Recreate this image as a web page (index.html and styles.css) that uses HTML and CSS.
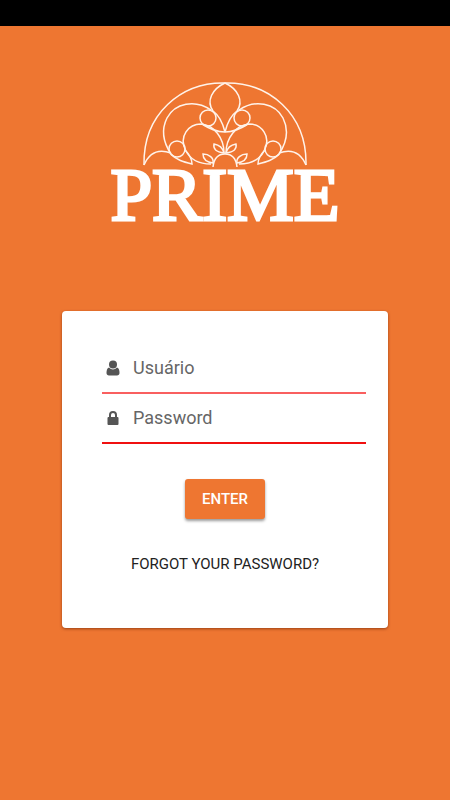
FILE: index.html
```html
<!DOCTYPE html>
<html lang="en">
<head>
<meta charset="utf-8">
<meta name="viewport" content="width=device-width, initial-scale=1">
<title>Prime</title>
<link rel="stylesheet" href="styles.css">
</head>
<body>
<div class="status-bar"></div>
<main class="login">
  <svg class="logo" viewBox="100 76 250 172" role="img" aria-label="Prime">
    <defs>
      <g id="half">
        <path d="M144 165C143 114 181 82 225 83"/>
        <path d="M225 83C212 89 206 101 213 111C220 116 223 124 225 132"/>
        <path d="M211 110C195 99 175 103 167 118C160 132 165 145 171 154C176 160 184 162 192 164C192 159 190 155 185 150"/>
        <circle cx="208" cy="118" r="8"/>
        <circle cx="177" cy="149" r="8"/>
        <path d="M144 165C150 151 160 149 171 153"/>
        <path d="M202 124C210 129 216 132 225 132"/>
        <path d="M211 164C199 164 190 159 186 151C178 136 189 124 201 124C214 125 224 138 224 153"/>
        <path d="M224 153C216 152 213 149 214 144C220 145 223 149 224 153Z"/>
        <path d="M213 163C206 162 203 158 203 154C209 154 214 158 213 163Z"/>
        <path d="M213 167C214 158 218 154 225 154"/>
      </g>
    </defs>
    <g class="rosette">
      <use href="#half"/>
      <use href="#half" transform="translate(450 0) scale(-1 1)"/>
    </g>
    <text class="wordmark" x="225" y="220" text-anchor="middle">PRIME</text>
  </svg>
  <form class="card">
    <div class="fields">
      <div class="field field-user">
        <svg class="icon" viewBox="0 0 14 16" aria-hidden="true"><circle cx="7" cy="4.5" r="4"/><path d="M3 7.5C1 8 .5 10.500.5 13C.5 14.500 1.500 15.500 3 15.500H11C12.500 15.500 13.500 14.500 13.500 13C13.500 10.500 13 8 11 7.500C8.500 10 5.500 10 3 7.500Z"/></svg>
        <input type="text" placeholder="Usuário" aria-label="Usuário">
      </div>
      <div class="field">
        <svg class="icon" viewBox="0 0 14 16" aria-hidden="true"><path fill-rule="evenodd" d="M3 7V5A4 4 0 0 1 11 5V7H11.500Q12.500 7 12.500 8V14Q12.500 15 11.500 15H2.500Q1.500 15 1.500 14V8Q1.500 7 2.500 7ZM5 7H9V5A2 2 0 0 0 5 5Z"/></svg>
        <input type="password" placeholder="Password" aria-label="Password">
      </div>
    </div>
    <button class="enter" type="submit">ENTER</button>
    <a class="forgot" href="#">FORGOT YOUR PASSWORD?</a>
  </form>
</main>
</body>
</html>
```
FILE: styles.css
```css
* {
  box-sizing: border-box;
}

body {
  margin: 0;
  min-height: 100vh;
  background: #ee7631;
  font-family: Roboto, "Liberation Sans", sans-serif;
}

.status-bar {
  height: 26px;
  background: #000;
}

.login {
  display: flex;
  flex-direction: column;
  align-items: center;
  padding: 50px 62px;
}

.logo {
  width: 250px;
  max-width: 100%;
  overflow: visible;
}

.rosette {
  fill: none;
  stroke: #fff3ea;
  stroke-width: 1.5;
}

.wordmark {
  font-family: "Liberation Serif", serif;
  font-size: 75px;
  fill: #fff;
  stroke: #fff;
  stroke-width: 3;
}

.card {
  display: flex;
  flex-direction: column;
  align-items: center;
  width: 100%;
  margin-top: 63px;
  padding: 33px 22px 54px 40px;
  background: #fff;
  border-radius: 4px;
  box-shadow: 0 1px 3px rgba(100, 30, 0, 0.6);
}

.fields {
  width: 100%;
}

.field {
  display: flex;
  align-items: center;
  height: 50px;
  padding-left: 4px;
  border-bottom: 2px solid #f01010;
}

.field-user {
  border-color: #f95f5f;
}

.icon {
  width: 14px;
  height: 16px;
  fill: #555;
}

.field input {
  flex: 1;
  min-width: 0;
  padding: 0 0 0 13px;
  border: 0;
  outline: 0;
  background: transparent;
  font: 18px/24px Roboto, "Liberation Sans", sans-serif;
}

.field input::placeholder {
  color: #666;
  opacity: 1;
}

.enter {
  height: 40px;
  margin: 35px 18px 0 0;
  padding: 0 17px;
  border: 0;
  border-radius: 3px;
  background: #ee7631;
  box-shadow: 0 2px 3px rgba(0, 0, 0, 0.4);
  color: #fff;
  font: 500 15px/20px Roboto, "Liberation Sans", sans-serif;
}

.forgot {
  margin: 35px 18px 0 0;
  color: #222;
  font-size: 15px;
  line-height: 20px;
  text-decoration: none;
}
```
